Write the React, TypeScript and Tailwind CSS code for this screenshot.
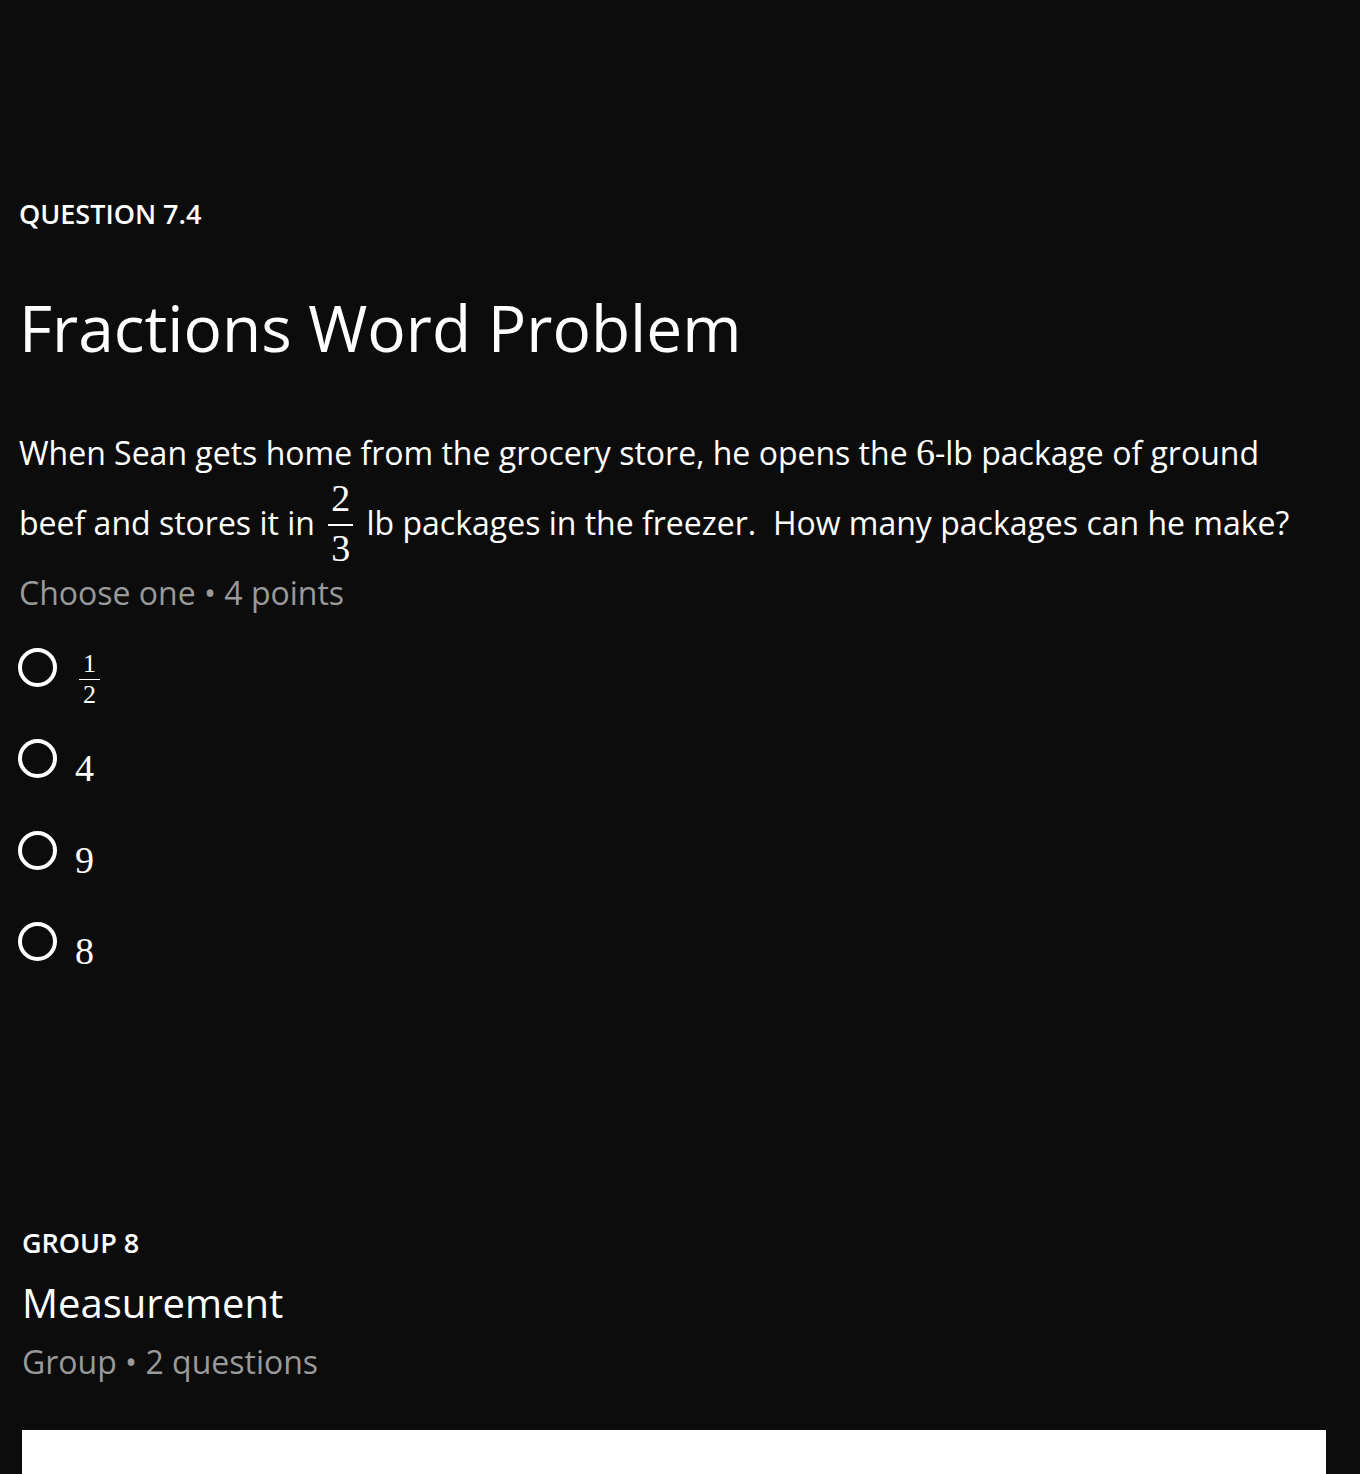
import React from "react";

const sans = { fontFamily: '"Open Sans", "Noto Sans", sans-serif' };
const serif = { fontFamily: '"Liberation Serif", "DejaVu Serif", serif' };

function Circle() {
  return <span className="block w-[39px] h-[39px] rounded-full border-[4px] border-white shrink-0 -ml-[1px]" />;
}

function DigitOption({ value }: { value: string }) {
  return (
    <div className="flex items-start h-[91.5px]">
      <Circle />
      <span className="ml-[18px] mt-[10px] text-[38px] leading-[39px] text-white" style={serif}>
        {value}
      </span>
    </div>
  );
}

export default function App() {
  return (
    <div className="h-[1474px] bg-[#0c0c0c] text-white overflow-hidden" style={sans}>
      <div className="pt-[196px] pl-[19px]">
        <div className="text-[27px] font-semibold leading-[36px]">QUESTION 7.4</div>
        <h1 className="mt-[52px] text-[64px] leading-[88px] font-normal">Fractions Word Problem</h1>
        <p className="mt-[46px] text-[32px] leading-[70px] max-w-[1292px]">
          When Sean gets home from the grocery store, he opens the{" "}
          <span style={serif} className="text-[38px] leading-[40px]">6</span>-lb package of ground beef and stores it in{" "}
          <span
            className="inline-flex flex-col items-stretch align-[24px] -my-[8px] ml-[5px] mr-[5px] text-[38px]"
            style={serif}
          >
            <span className="block leading-[30px] h-[30px] px-[3px] text-center">2</span>
            <span className="block mt-[11px] h-[1.5px] bg-white" />
            <span className="block mt-[7px] leading-[30px] h-[30px] px-[3px] text-center">3</span>
          </span>{" "}
          lb packages in the freezer.&nbsp; How many packages can he make?
        </p>
        <div className="mt-[15px] text-[32px] leading-[40px] text-[#9a9a9a]">Choose one • 4 points</div>
        <div className="mt-[34.5px] flex flex-col">
          <div className="flex items-start h-[91.5px]">
            <Circle />
            <span
              className="ml-[22px] mt-[6px] inline-flex flex-col items-stretch text-[26px] text-white"
              style={serif}
            >
              <span className="block leading-[20px] h-[20px] px-[4px] text-center">1</span>
              <span className="block mt-[5px] h-[1.5px] bg-white" />
              <span className="block mt-[5px] leading-[20px] h-[20px] px-[4px] text-center">2</span>
            </span>
          </div>
          <DigitOption value="4" />
          <DigitOption value="9" />
          <DigitOption value="8" />
        </div>
      </div>
      <div className="pl-[22px] pr-[34px] mt-[211px]">
        <div className="text-[27px] font-semibold leading-[36px]">GROUP 8</div>
        <div className="mt-[18px] text-[40px] leading-[48px]">Measurement</div>
        <div className="mt-[13px] text-[32px] leading-[44px] text-[#9a9a9a]">Group • 2 questions</div>
        <div className="mt-[46px] h-[44px] bg-white" />
      </div>
    </div>
  );
}
